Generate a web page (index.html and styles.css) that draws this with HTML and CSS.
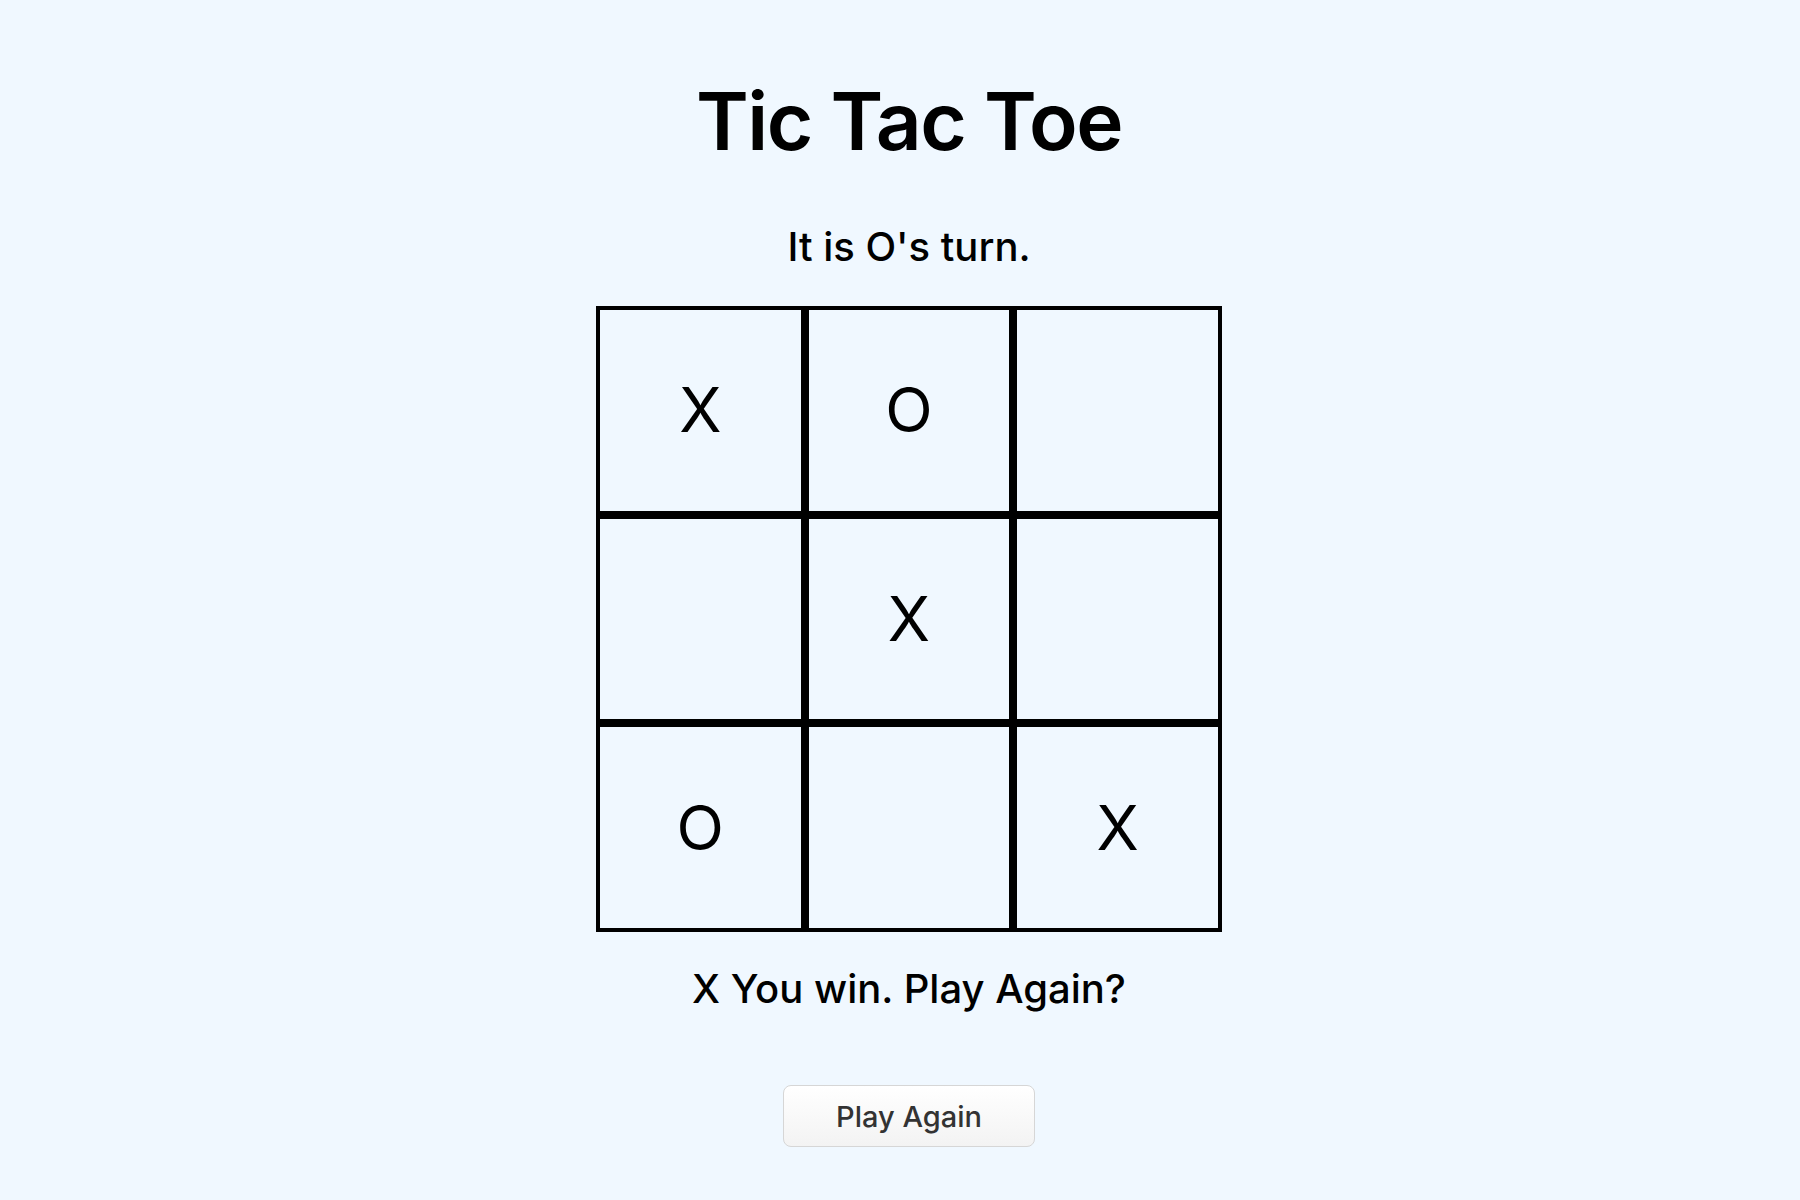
FILE: index.html
```html
<!DOCTYPE html>
<html lang="en">
<head>
<meta charset="utf-8">
<title>Tic Tac Toe</title>
<link rel="stylesheet" href="styles.css">
</head>
<body>
<main class="game">
  <h1 class="title">Tic Tac Toe</h1>
  <p class="status">It is O's turn.</p>
  <div class="board">
    <div class="cell">X</div>
    <div class="cell">O</div>
    <div class="cell"></div>
    <div class="cell"></div>
    <div class="cell">X</div>
    <div class="cell"></div>
    <div class="cell">O</div>
    <div class="cell"></div>
    <div class="cell">X</div>
  </div>
  <p class="result">X You win. Play Again?</p>
  <button class="again" type="button">Play Again</button>
</main>
</body>
</html>
```

FILE: styles.css
```css
html, body {
  margin: 0;
  padding: 0;
}

body {
  background: #f0f8ff;
  color: #000;
  font-family: Inter, "Open Sans", sans-serif;
  height: 1200px;
}

.game {
  box-sizing: border-box;
  padding-left: 18px;
  display: flex;
  flex-direction: column;
  align-items: center;
  text-align: center;
}

.title {
  margin: 81px 0 0;
  font-size: 80px;
  line-height: 80px;
  font-weight: 600;
  letter-spacing: -1.5px;
}

.status {
  margin: 66px 0 0;
  font-size: 40px;
  line-height: 40px;
  font-weight: 500;
}

.board {
  margin-top: 39px;
  width: 626px;
  height: 626px;
  display: grid;
  grid-template-columns: repeat(3, 1fr);
  grid-template-rows: repeat(3, 1fr);
}

.cell {
  box-sizing: border-box;
  border: 4px solid #000;
  display: flex;
  align-items: center;
  justify-content: center;
  font-size: 62px;
  font-weight: 400;
  line-height: 1;
}

.result {
  margin: 37px 0 0;
  font-size: 40px;
  line-height: 40px;
  font-weight: 500;
}

.again {
  margin-top: 76px;
  width: 252px;
  height: 62px;
  border: 1px solid #d6d6d6;
  border-radius: 8px;
  background: linear-gradient(#ffffff, #f3f3f3);
  color: #333;
  font-family: Inter, "Open Sans", sans-serif;
  font-size: 29px;
  font-weight: 500;
  padding: 0;
}
```
